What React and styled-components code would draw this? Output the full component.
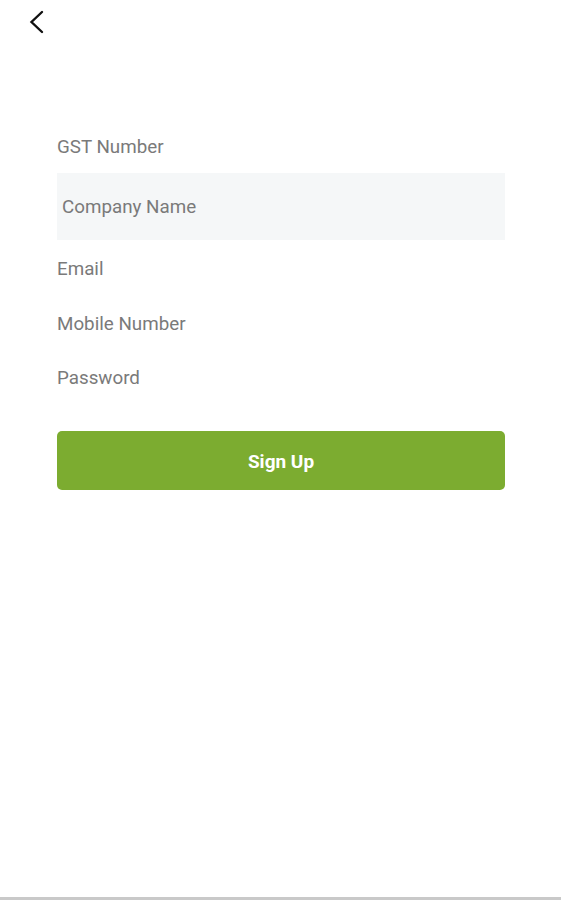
import React from "react";
import styled, { createGlobalStyle } from "styled-components";

const Global = createGlobalStyle`
  html, body { margin: 0; padding: 0; background: #fff; }
  body { font-family: Roboto, "Noto Sans", sans-serif; }
`;

const Screen = styled.div`
  height: 900px;
  box-sizing: border-box;
  border-bottom: 3px solid #c9c9c9;
  display: flex;
  flex-direction: column;
`;

const TopBar = styled.div`
  height: 44px;
  display: flex;
  align-items: center;
  padding-left: 26px;
`;

const BackButton = styled.button`
  border: none;
  background: none;
  padding: 0;
  width: 20px;
  height: 24px;
  display: flex;
  align-items: center;
  justify-content: center;
  cursor: pointer;
`;

const Form = styled.form`
  display: flex;
  flex-direction: column;
  padding: 77px 56px 0 57px;
`;

const Row = styled.div`
  height: ${(p) => p.$h || 54}px;
  display: flex;
  align-items: center;
  font-size: 18.8px;
  color: #7a7a7a;
`;

const FilledRow = styled(Row)`
  background: #f5f7f8;
  padding-left: 5px;
  margin-bottom: 2px;
`;

const SubmitButton = styled.button`
  margin-top: 26px;
  height: 59px;
  border: none;
  border-radius: 5px;
  background: #7cac30;
  color: #fff;
  font-family: Roboto, "Noto Sans", sans-serif;
  font-weight: 700;
  font-size: 19px;
  padding-top: 2px;
  cursor: pointer;
`;

export default function App() {
  return (
    <>
      <Global />
      <Screen>
        <TopBar>
          <BackButton aria-label="Back">
            <svg width="16" height="24" viewBox="0 0 16 24" fill="none">
              <path d="M14 2 L3.5 12 L14 22" stroke="#111" strokeWidth="2.4" strokeLinecap="round" strokeLinejoin="miter" />
            </svg>
          </BackButton>
        </TopBar>
        <Form onSubmit={(e) => e.preventDefault()}>
          <Row $h={52}>GST Number</Row>
          <FilledRow $h={67}>Company Name</FilledRow>
          <Row>Email</Row>
          <Row $h={55}>Mobile Number</Row>
          <Row>Password</Row>
          <SubmitButton type="submit">Sign Up</SubmitButton>
        </Form>
      </Screen>
    </>
  );
}
